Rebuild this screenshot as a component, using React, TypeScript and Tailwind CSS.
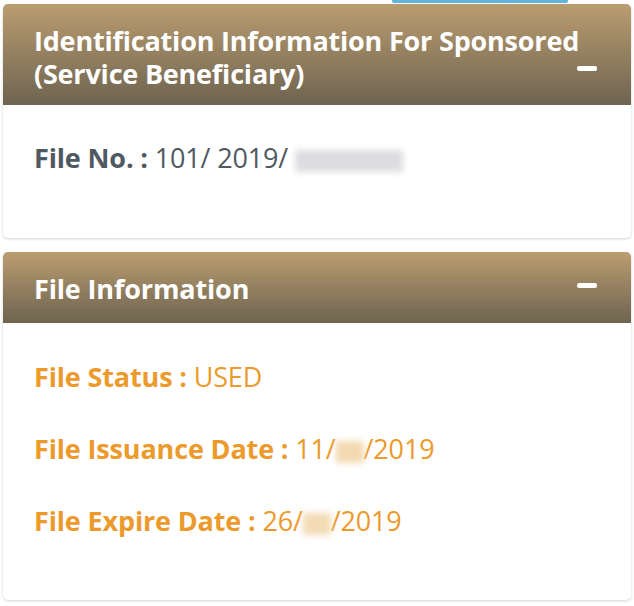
import React from 'react'

function Minus() {
  return <span className="block w-[20px] h-[5px] rounded-[2px] bg-white" />
}

function Card({ title, children, bodyClass }: { title: React.ReactNode; children: React.ReactNode; bodyClass: string }) {
  return (
    <div className="rounded-[5px] bg-white shadow-[0_1px_3px_rgba(0,0,0,0.18)] overflow-hidden">
      <div className="flex items-end justify-between bg-gradient-to-b from-[#bb9d70] to-[#6e6450] pl-[31px] pr-[34px]">
        {title}
      </div>
      <div className={bodyClass}>{children}</div>
    </div>
  )
}

export default function App() {
  return (
    <div className="w-[634px] h-[606px] bg-white px-[3px] font-['Open_Sans',sans-serif] relative">
      <div className="absolute left-[392px] top-0 w-[176px] h-[3px] rounded-b-[2px] bg-[#62b4dc]" />
      <div className="pt-[4px] flex flex-col gap-[14px]">
        <Card
          title={
            <>
              <h2 className="min-w-0 whitespace-nowrap pt-[20px] pb-[15px] text-[27px] leading-[33px] font-bold text-white tracking-[-0.2px]">
                Identification Information For Sponsored
                <br />
                (Service Beneficiary)
              </h2>
              <div className="shrink-0 pb-[34px]"><Minus /></div>
            </>
          }
          bodyClass="h-[133px] pl-[31px] pt-[37px]"
        >
          <p className="text-[27px] leading-[32px] text-[#505961] tracking-[-0.15px]">
            <span className="font-bold">File No. :</span> 101/ 2019/{' '}
            <span className="inline-block align-middle w-[108px] h-[22px] bg-[#dcdddf] blur-[3px]" />
          </p>
        </Card>
        <Card
          title={
            <>
              <h2 className="whitespace-nowrap pt-[21px] pb-[18px] text-[27px] leading-[32px] font-bold text-white tracking-[-0.15px]">File Information</h2>
              <div className="shrink-0 pb-[35px]"><Minus /></div>
            </>
          }
          bodyClass="h-[277px] pl-[31px] pt-[38px] flex flex-col gap-[40px] text-[27px] leading-[32px] text-[#ec9a2b] tracking-[-0.15px]"
        >
          <p><span className="font-bold">File Status :</span> USED</p>
          <p>
            <span className="font-bold">File Issuance Date :</span> 11/
            <span className="inline-block align-middle w-[28px] h-[22px] bg-[#f3d9b0] blur-[3px]" />/2019
          </p>
          <p>
            <span className="font-bold">File Expire Date :</span> 26/
            <span className="inline-block align-middle w-[28px] h-[22px] bg-[#f3dbb5] blur-[3px]" />/2019
          </p>
        </Card>
      </div>
    </div>
  )
}
